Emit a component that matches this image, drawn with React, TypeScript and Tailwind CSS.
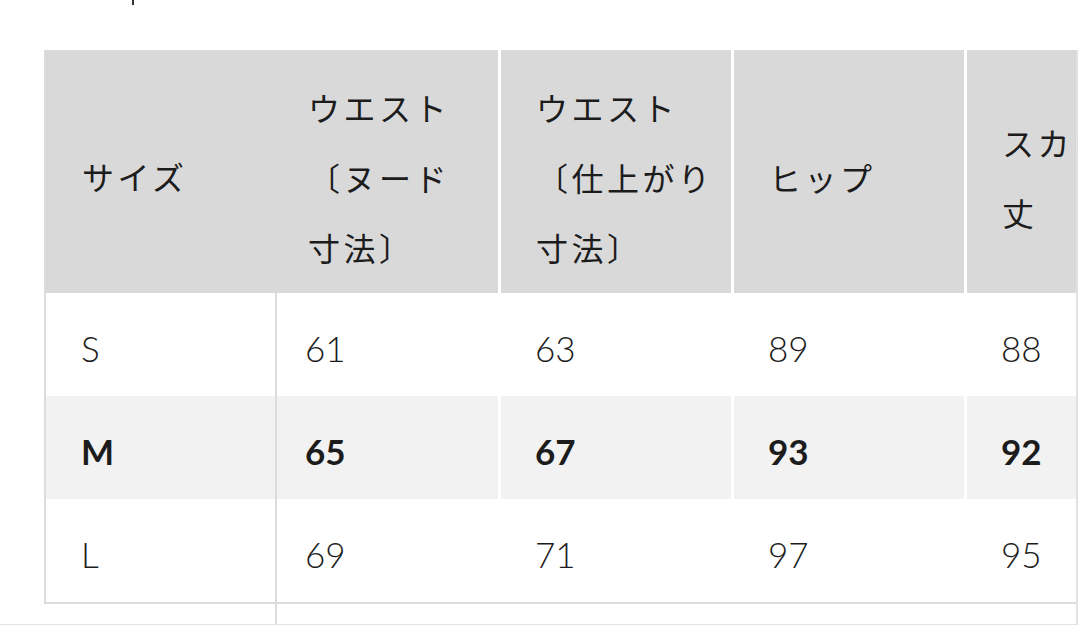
import React from "react";

const jp = { fontFamily: '"Noto Sans CJK JP", "Noto Sans", sans-serif' };
const num = { fontFamily: 'Lato, "Noto Sans CJK JP", sans-serif' };

const rows = [
  { size: "S", v: ["61", "63", "89", "88"], bold: false, bg: "bg-white" },
  { size: "M", v: ["65", "67", "93", "92"], bold: true, bg: "bg-[#f2f2f2]" },
  { size: "L", v: ["69", "71", "97", "95"], bold: false, bg: "bg-white" },
];

export default function App() {
  return (
    <div className="w-[1080px] h-[625px] overflow-hidden bg-white text-[#1c1c1c]">
      <div className="h-[50px]">
        <div className="ml-[132px] w-[2px] h-[5px] bg-[#333]" />
      </div>
      <div className="ml-[44px] w-[1034px] border-r-2 border-[#e2e2e2] overflow-hidden">
        <div className="w-[1400px] border-l-2 border-b-2 border-[#dcdcdc]">
          <div
            className="grid grid-cols-[229px_223px_233px_233px_480px] h-[243px] bg-[#d9d9d9] text-[32px] leading-[70px] tracking-[3.5px]"
            style={jp}
          >
            <div className="flex items-center pl-[36px] pt-[8px]">サイズ</div>
            <div className="flex items-center pl-[31px] pt-[10px] border-l-2 border-[#d9d9d9]">
              <div>ウエスト<br />〔ヌード<br />寸法〕</div>
            </div>
            <div className="flex items-center pl-[35px] pt-[10px] border-l-[3px] border-white">
              <div>ウエスト<br />〔仕上がり<br />寸法〕</div>
            </div>
            <div className="flex items-center pl-[35px] pt-[10px] border-l-[3px] border-white">ヒップ</div>
            <div className="flex items-center pl-[35px] pt-[10px] border-l-[3px] border-white whitespace-nowrap">
              <div>スカート<br />丈</div>
            </div>
          </div>
          {rows.map((r) => (
            <div
              key={r.size}
              className={`grid grid-cols-[229px_223px_233px_233px_480px] h-[103px] ${r.bg} text-[35px] ${r.bold ? "font-bold" : "font-light"}`}
              style={num}
            >
              <div className="flex items-center pl-[35px] pt-[8px]">{r.size}</div>
              {r.v.map((v, i) => (
                <div
                  key={i}
                  className={`flex items-center pt-[8px] ${i === 0 ? "pl-[28px] border-l-2 border-[#dcdcdc]" : "pl-[34px] border-l-[3px] border-white"}`}
                >
                  {v}
                </div>
              ))}
            </div>
          ))}
        </div>
      </div>
      <div className="w-[1078px] h-[22px] border-r-2 border-b-2 border-[#e2e2e2] flex">
        <div className="ml-[275px] w-[2px] h-full bg-[#dcdcdc]" />
      </div>
    </div>
  );
}
